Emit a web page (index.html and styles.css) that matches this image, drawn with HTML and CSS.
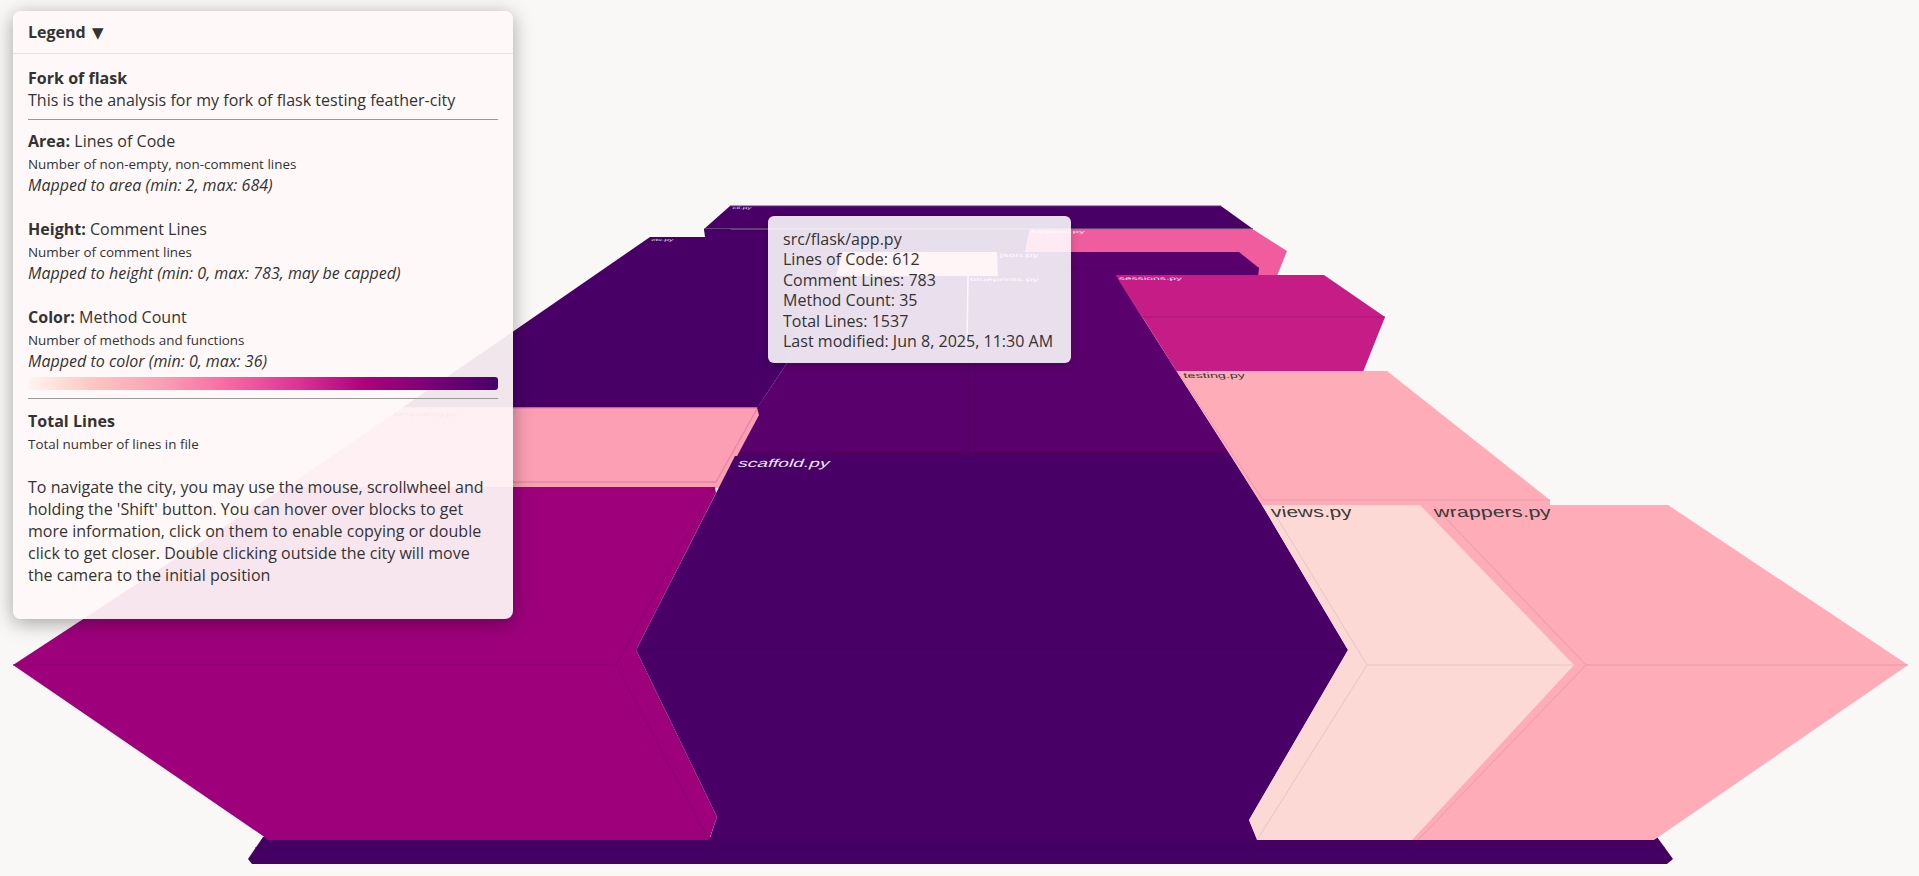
FILE: index.html
```html
<!DOCTYPE html>
<html lang="en">
<head>
    <meta charset="UTF-8">
    <meta name="viewport" content="width=device-width, initial-scale=1.0">
    <title>Fork of flask - feather city</title>
    <link rel="stylesheet" href="styles.css">
</head>
<body>

<!-- City scene -->
<svg class="city" viewBox="0 0 1919 876" aria-label="Code city of flask">
    <!-- back blocks -->
    <polygon class="deep" points="730,206 1221,206 1253,229 1030,229 1020,276 800,340 757,408 704,229"/>
    <line class="edge-light" x1="730" y1="206" x2="1221" y2="206"/>
    <line class="edge-grey" x1="704" y1="229" x2="1253" y2="229"/>
    <polygon class="hot" points="1030,230 1254,230 1287,251 1277,276 1258,276 1020,276"/>

    <!-- middle purple blocks -->
    <polygon class="plum" points="800,252 1239,252 1259,268 1258,277 1117,277 1177,372 1231,456 735,456 757,408 787,363"/>
    <line class="edge-plum" x1="1000" y1="268" x2="1259" y2="268"/>
    <rect class="plum-strip" x="740" y="452" width="488" height="4"/>
    <line class="edge-plum" x1="968" y1="363" x2="968" y2="453"/>
    <line class="edge-plum" x1="975" y1="363" x2="975" y2="453"/>
    <polygon class="blush" points="843,252 997,252 998,276 836,276"/>
    <line class="edge-pale" x1="968" y1="276" x2="967" y2="345"/>

    <!-- sessions -->
    <polygon class="rose" points="1116,275 1324,275 1385,317 1363,372 1177,372"/>
    <line class="edge-rose" x1="1142" y1="317" x2="1385" y2="317"/>
    <line class="edge-rose" x1="1116" y1="275" x2="1142" y2="317"/>

    <!-- big left block -->
    <polygon class="deep" points="650,237 705,237 704,229 730,229 800,300 787,363 757,408 402,408"/>

    <!-- pink block -->
    <polygon class="candy" points="402,408 757,408 759,415 720,488 285,488"/>
    <line class="edge-candy" x1="402" y1="408" x2="757" y2="408"/>
    <line class="edge-candy" x1="757" y1="409" x2="716" y2="482"/>
    <line class="edge-candy" x1="300" y1="482" x2="716" y2="482"/>

    <!-- base plate -->
    <polygon class="base" points="263,837 1657,837 1673,859 1667,864 252,864 248,859"/>
    <line class="edge-base" x1="255" y1="848" x2="1665" y2="848"/>
    <line class="edge-base" x1="250" y1="858" x2="1670" y2="858"/>

    <!-- scaffold -->
    <polygon class="deep" points="735,456 1231,456 1262,505 1348,650 1249,820 1258,841 709,841 717,817 636,650"/>
    <line class="edge-deep" x1="636" y1="649" x2="1348" y2="649"/>
    <line class="edge-deep" x1="717" y1="836" x2="1252" y2="836"/>

    <!-- big magenta block -->
    <polygon class="magenta" points="285,487 715,487 716,493 636,650 717,817 709,840 268,840 263,836 13,665"/>
    <polyline class="edge-magenta" points="13,665 616,665 709,840"/>
    <line class="edge-magenta" x1="616" y1="665" x2="714" y2="487"/>

    <!-- testing -->
    <polygon class="salmon" points="1177,371 1387,371 1550,500 1550,505 1262,505"/>
    <polyline class="edge-salmon" points="1177,371 1263,500 1550,500"/>

    <!-- wrappers -->
    <polygon class="salmon" points="1419,505 1668,505 1908,665 1654,840 1411,840 1573,665"/>
    <polyline class="edge-salmon" points="1434,506 1586,665 1418,840"/>
    <line class="edge-salmon" x1="1586" y1="665" x2="1908" y2="665"/>

    <!-- views -->
    <polygon class="peach" points="1262,505 1420,505 1574,665 1412,840 1257,840 1249,820 1348,650"/>
    <polyline class="edge-peach" points="1270,506 1367,665 1257,840"/>
    <line class="edge-peach" x1="1367" y1="665" x2="1574" y2="665"/>

    <!-- labels lying on the roofs -->
    <text class="label light" transform="translate(737,467) skewX(-22) scale(1.42,.85)" font-size="13.5">scaffold.py</text>
    <text class="label dark" transform="translate(1272,517) skewX(10) scale(1.4,1)" font-size="15">views.py</text>
    <text class="label dark" transform="translate(1435,517) skewX(10) scale(1.43,1)" font-size="15">wrappers.py</text>
    <text class="label dark" transform="translate(1184,378) skewX(14) scale(1.6,.85)" font-size="9">testing.py</text>
    <text class="label light" transform="translate(1119,280) skewX(10) scale(1.35,.5)" font-size="9">sessions.py</text>
    <text class="label light" transform="translate(970,281) skewX(6) scale(1.35,.5)" font-size="9">blueprints.py</text>
    <text class="label light" transform="translate(1000,257) scale(1.35,.5)" font-size="9">json.py</text>
    <text class="label light" transform="translate(1031,233) scale(1.3,.45)" font-size="9">helpers.py</text>
    <text class="label light" transform="translate(651,241) skewX(-20) scale(1.2,.5)" font-size="7">ctx.py</text>
    <text class="label light" transform="translate(732,209) skewX(-20) scale(1.2,.45)" font-size="7">cli.py</text>
    <text class="label dark" transform="translate(393,416) skewX(-24) scale(1.2,.6)" font-size="9">templating.py</text>
</svg>

<!-- Legend panel -->
<aside class="legend">
    <div class="legend-header">Legend <span class="legend-arrow">▼</span></div>
    <div class="legend-body">
        <div class="row"><strong>Fork of flask</strong></div>
        <div class="row">This is the analysis for my fork of flask testing feather-city</div>
        <hr class="rule">

        <section class="metric">
            <div class="row"><strong>Area:</strong> Lines of Code</div>
            <div class="row small">Number of non-empty, non-comment lines</div>
            <div class="row"><em>Mapped to area (min: 2, max: 684)</em></div>
        </section>

        <section class="metric">
            <div class="row"><strong>Height:</strong> Comment Lines</div>
            <div class="row small">Number of comment lines</div>
            <div class="row"><em>Mapped to height (min: 0, max: 783, may be capped)</em></div>
        </section>

        <section>
            <div class="row"><strong>Color:</strong> Method Count</div>
            <div class="row small">Number of methods and functions</div>
            <div class="row"><em>Mapped to color (min: 0, max: 36)</em></div>
            <div class="scale-bar"></div>
        </section>
        <hr class="rule rule-wide">

        <section>
            <div class="row"><strong>Total Lines</strong></div>
            <div class="row small">Total number of lines in file</div>
        </section>

        <p class="help">To navigate the city, you may use the mouse, scrollwheel and holding the 'Shift' button. You can hover over blocks to get more information, click on them to enable copying or double click to get closer. Double clicking outside the city will move the camera to the initial position</p>
    </div>
</aside>

<!-- Hover tooltip -->
<div class="tooltip">
    <div>src/flask/app.py</div>
    <div>Lines of Code: 612</div>
    <div>Comment Lines: 783</div>
    <div>Method Count: 35</div>
    <div>Total Lines: 1537</div>
    <div>Last modified: Jun 8, 2025, 11:30 AM</div>
</div>

</body>
</html>
```

FILE: styles.css
```css
html, body {
    margin: 0;
    padding: 0;
    height: 100%;
    overflow: hidden;
}

body {
    background: #f9f8f6;
    font-family: "Open Sans", "Noto Sans", sans-serif;
    font-size: 16px;
    letter-spacing: 0.02px;
    color: #333;
}

.city {
    position: absolute;
    left: 0;
    top: 0;
    width: 1919px;
    height: 876px;
}

/* block colours */
.deep { fill: #480066; }
.plum { fill: #5a006c; }
.plum-strip { fill: #52005f; }
.hot { fill: #f15c9e; }
.blush { fill: #fda8b8; }
.rose { fill: #c61c86; }
.candy { fill: #fd9fb4; }
.magenta { fill: #9e007c; }
.salmon { fill: #fdacb8; }
.peach { fill: #fdd9d6; }
.base { fill: #440062; }

/* block edges */
.edge-light, .edge-grey, .edge-plum, .edge-pale, .edge-rose, .edge-candy,
.edge-base, .edge-deep, .edge-magenta, .edge-salmon, .edge-peach {
    fill: none;
    stroke-width: 1;
}
.edge-light { stroke: #6a2a88; }
.edge-grey { stroke: #6b5a78; stroke-width: 1.5; }
.edge-plum { stroke: #4f005e; }
.edge-pale { stroke: #ffb6c4; stroke-width: 1.5; }
.edge-rose { stroke: #ad1876; }
.edge-candy { stroke: #e08ca2; stroke-width: 1.5; }
.edge-base { stroke: #3e0059; }
.edge-deep { stroke: #3f0059; }
.edge-magenta { stroke: #87006c; }
.edge-salmon { stroke: #e89cab; }
.edge-peach { stroke: #e8c5c2; }

.label {
    font-family: "Liberation Sans", sans-serif;
    letter-spacing: 0;
}
.label.light { fill: #eee6f0; }
.label.dark { fill: #3a3a3a; }

/* legend */
.legend {
    position: absolute;
    left: 13px;
    top: 11px;
    width: 500px;
    height: 608px;
    box-sizing: border-box;
    background: rgba(255, 248, 248, 0.93);
    border-radius: 8px;
    box-shadow: 0 4px 20px rgba(0, 0, 0, 0.35);
}

.legend-header {
    height: 42px;
    line-height: 42px;
    padding: 0 15px;
    font-weight: 700;
    border-bottom: 1px solid #e6e2e2;
}

.legend-arrow {
    font-size: 15px;
    margin-left: 2px;
    font-family: "DejaVu Sans", sans-serif;
}

.legend-body {
    padding: 13px 15px 12px;
}

.row {
    line-height: 22px;
    white-space: nowrap;
}

.row strong {
    font-weight: 700;
}

.small {
    font-size: 13.4px;
    line-height: 20px;
    padding-top: 2px;
}

.metric {
    margin-bottom: 22px;
}

.rule {
    border: none;
    border-top: 1px solid #999;
    margin: 8px 0 10px;
}

.rule-wide {
    margin-bottom: 11px;
}

.scale-bar {
    height: 13px;
    margin-top: 5px;
    border-radius: 0 3px 3px 0;
    background: linear-gradient(to right, #fff5f0, #fcc5c0, #fa9fb5, #f768a1, #dd3497, #ae017e, #7a0177, #49006a);
}

.help {
    margin: 22px 0 0;
    line-height: 22px;
}

/* tooltip */
.tooltip {
    position: absolute;
    left: 768px;
    top: 216px;
    width: 303px;
    height: 147px;
    box-sizing: border-box;
    padding: 13px 15px;
    line-height: 20.4px;
    white-space: nowrap;
    background: rgba(255, 255, 255, 0.875);
    border-radius: 6px;
    box-shadow: 0 2px 10px rgba(0, 0, 0, 0.2);
}
```
